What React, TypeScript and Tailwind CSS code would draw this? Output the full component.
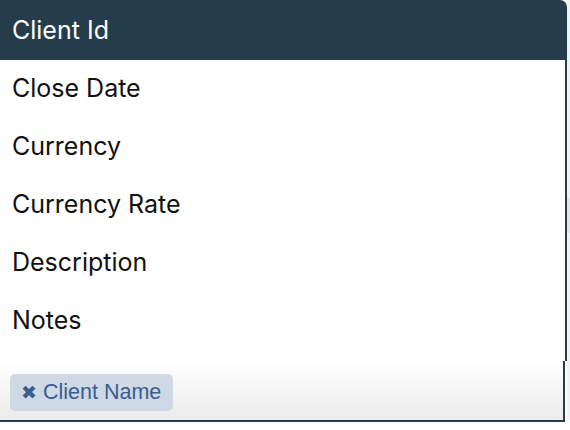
const columns = ["Close Date", "Currency", "Currency Rate", "Description", "Notes"];

export default function App() {
  return (
    <div className="flex h-[430px] w-[570px] bg-white font-['Inter',sans-serif]">
      <div className="flex w-[567px] flex-col">
        <div className="flex h-[60px] items-center rounded-tr-[7px] bg-[#253c4a] px-3 pt-[1px] text-[25px] text-white">
          Client Id
        </div>
        <ul className="border-r-2 border-[#253c4a] pb-[11px]">
          {columns.map((c) => (
            <li key={c} className="flex h-[58px] items-center px-3 pb-[1px] text-[25px] text-[#111]">
              {c}
            </li>
          ))}
        </ul>
        <div className="flex h-[61px] w-[565px] items-start border-r-2 border-b-2 border-[#253c4a] bg-gradient-to-b from-white to-[#ebebeb] px-[10px] pt-[13px]">
          <span className="flex h-[37px] items-center gap-[6px] rounded-[5px] bg-[#cfd8e5] pl-[11px] pr-[12px] font-['Liberation_Sans',Arial,sans-serif] text-[21.5px] text-[#3a5d92]">
            <span className="text-[19px] leading-none">✖</span>
            Client Name
          </span>
        </div>
      </div>
      <div className="flex h-[420px] w-[3px] flex-col bg-[#f2f2f2]">
        <div className="h-[198px]" />
        <div className="h-[35px] bg-[#e4e4e4]" />
      </div>
    </div>
  );
}
